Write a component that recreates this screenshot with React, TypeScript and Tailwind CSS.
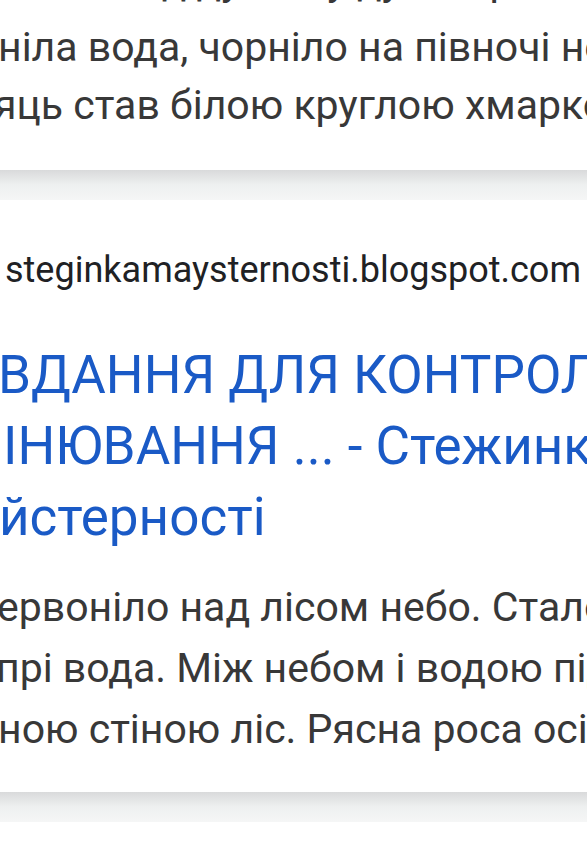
import React from "react";

const font = { fontFamily: "Roboto, 'Noto Sans', sans-serif" };

function Separator() {
  return (
    <div className="h-[30px] w-full bg-linear-to-b from-[#d9dadb] via-[#eef0f0] to-[#f5f6f6]" />
  );
}

function Line({ children, className }: { children: React.ReactNode; className: string }) {
  return <div className={"whitespace-nowrap " + className}>{children}</div>;
}

export default function App() {
  return (
    <div className="w-[587px] h-[848px] overflow-hidden bg-white" style={font}>
      {/* previous result, only its tail is visible */}
      <div className="pb-[36px] text-[41px] leading-[58px] text-[#383838]">
        <Line className="-mt-[43px] mb-[13px] ml-[128px] leading-[48px]">під дубом у дупл з ріки</Line>
        <Line className="-ml-[2px]">ніла вода, чорніло на півночі небо</Line>
        <Line className="-ml-[6px]">яць став білою круглою хмаркою</Line>
      </div>
      <Separator />
      <div className="pt-[46px] pb-[32px]">
        <Line className="ml-[5px] text-[36px] leading-[48px] text-[#202124]">
          steginkamaysternosti.blogspot.com
        </Line>
        <div className="mt-[46px] text-[53px] leading-[71px] text-[#1a5ac6]">
          <Line className="-ml-[2px]">ВДАННЯ ДЛЯ КОНТРОЛЮ</Line>
          <Line className="ml-[3px]">ІНЮВАННЯ ... - Стежинка</Line>
          <Line className="-ml-[1px]">йстерності</Line>
        </div>
        <div className="mt-[24px] text-[41px] leading-[61px] text-[#383838]">
          <Line className="-ml-[3px]">ервоніло над лісом небо. Стало</Line>
          <Line className="-ml-[4px]">прі вода. Між небом і водою під</Line>
          <Line className="-ml-[2px]">ною стіною ліс. Рясна роса осіла</Line>
        </div>
      </div>
      <Separator />
    </div>
  );
}
